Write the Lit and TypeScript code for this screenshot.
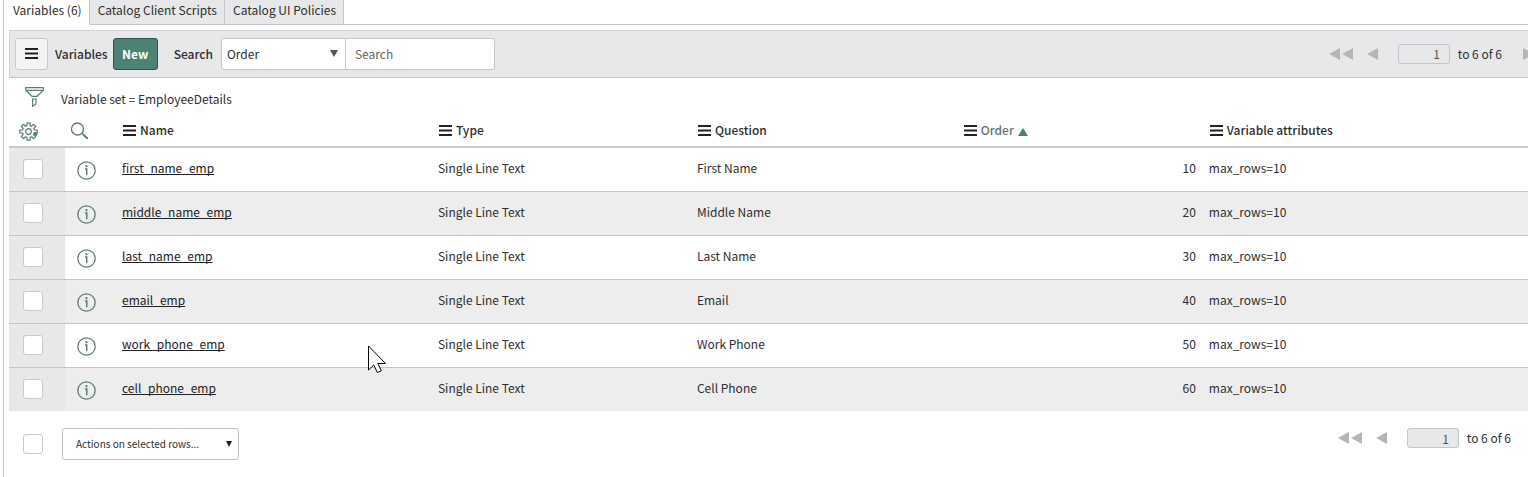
import { LitElement, html, css, svg } from "lit";
import { customElement, property } from "lit/decorators.js";

interface Variable {
  name: string;
  type: string;
  question: string;
  order: number;
  attributes: string;
}

const variables: Variable[] = [
  ["first_name_emp", "First Name"],
  ["middle_name_emp", "Middle Name"],
  ["last_name_emp", "Last Name"],
  ["email_emp", "Email"],
  ["work_phone_emp", "Work Phone"],
  ["cell_phone_emp", "Cell Phone"],
].map(([name, question], i) => ({
  name,
  question,
  type: "Single Line Text",
  order: (i + 1) * 10,
  attributes: "max_rows=10",
}));

const base = css`
  * {
    box-sizing: border-box;
  }
  button,
  input,
  select {
    font: inherit;
    color: inherit;
    margin: 0;
  }
  button {
    padding: 0;
    border: 0;
    background: none;
  }
  svg {
    display: block;
  }
`;

const bars = html`<svg width="13" height="11" viewBox="0 0 13 11" aria-hidden="true">
  <path d="M0 1h13M0 5.5h13M0 10h13" stroke="#222" stroke-width="2" />
</svg>`;

const arrowPath = (x: number, flip = false) =>
  flip ? svg`<path d="M${x} 0v12l11-6z" />` : svg`<path d="M${x + 11} 0v12L${x} 6z" />`;

/* Eight-toothed cog outline, centred on (cx, cy). */
function cogPath(cx: number, cy: number, outer: number, inner: number): string {
  const points: string[] = [];
  const teeth = 8;
  for (let i = 0; i < teeth; i++) {
    const mid = (i / teeth) * Math.PI * 2 - Math.PI / 2;
    for (const [offset, radius] of [
      [-0.27, inner],
      [-0.17, outer],
      [0.17, outer],
      [0.27, inner],
    ]) {
      const x = cx + Math.cos(mid + offset) * radius;
      const y = cy + Math.sin(mid + offset) * radius;
      points.push(`${x.toFixed(2)} ${y.toFixed(2)}`);
    }
  }
  return `M${points.join("L")}z`;
}

@customElement("list-pager")
class ListPager extends LitElement {
  @property({ type: Boolean }) next = false;

  static styles = [
    base,
    css`
      :host {
        display: flex;
        align-items: center;
        flex: none;
        line-height: 20px;
      }
      svg {
        fill: #b4b6b7;
      }
      .prev {
        margin: 0 20px 0 14px;
      }
      .page {
        width: 52px;
        height: 20px;
        padding: 0 9px;
        border: 1px solid #c3c5c8;
        border-radius: 3px;
        background: #e6e8ea;
        color: #555;
        text-align: right;
        line-height: 18px;
      }
      .total {
        margin: 0 2px 0 8px;
      }
      .next {
        margin-left: 19px;
      }
    `,
  ];

  render() {
    return html`
      <button aria-label="First page">
        <svg width="24" height="12" viewBox="0 0 24 12">${arrowPath(0)}${arrowPath(13)}</svg>
      </button>
      <button class="prev" aria-label="Previous page">
        <svg width="11" height="12" viewBox="0 0 11 12">${arrowPath(0)}</svg>
      </button>
      <input class="page" type="text" aria-label="Page row" value="1" />
      <span class="total">to 6 of 6</span>
      ${this.next
        ? html`<button class="next" aria-label="Next page">
            <svg width="11" height="12" viewBox="0 0 11 12">${arrowPath(0, true)}</svg>
          </button>`
        : ""}
    `;
  }
}

@customElement("app-root")
class AppRoot extends LitElement {
  static styles = [
    base,
    css`
      :host {
        display: block;
        position: relative;
        min-height: 100vh;
        margin-left: 3px;
        border-left: 1px solid #c4c6c8;
        overflow: hidden;
        background: #fff;
        color: #2e2e2e;
        font: 12px/20px "Noto Sans CJK SC", "Open Sans", sans-serif;
        box-sizing: border-box;
      }
      .tabs {
        display: flex;
        height: 25px;
        padding-left: 1px;
      }
      .tab {
        flex: none;
        padding: 0 7px 4px 8px;
        border-right: 1px solid #c4c6c8;
        border-bottom: 1px solid #c4c6c8;
        background: #e6e8ea;
      }
      .tab.active {
        background: #fff;
        border-bottom-color: #fff;
      }
      .tab-rest {
        flex: 1;
        border-bottom: 1px solid #c4c6c8;
      }
      .list {
        margin: 5px 0 0 5px;
      }
      .toolbar {
        display: flex;
        align-items: center;
        height: 48px;
        padding: 0 0 1px 5px;
        border: 1px solid #cfd1d3;
        border-bottom-color: #c4c6c8;
        border-right: 0;
        background: #e6e8ea;
      }
      .menu {
        display: grid;
        place-items: center;
        flex: none;
        width: 33px;
        height: 32px;
        border: 1px solid #c8cacc;
        border-radius: 3px;
        background: #f3f4f6;
      }
      .title,
      .search-label {
        font-weight: 500;
      }
      .title {
        margin: 0 5px 0 7px;
      }
      .new {
        width: 45px;
        height: 32px;
        margin-right: 16px;
        border: 1px solid #2f5548;
        border-radius: 3px;
        background: #4c8273;
        color: #fff;
        font-weight: 700;
      }
      .search-label {
        margin-right: 8px;
      }
      .picker {
        display: grid;
        align-items: center;
        flex: none;
      }
      .picker > * {
        grid-area: 1 / 1;
      }
      .picker select {
        width: 100%;
        height: 32px;
        appearance: none;
        border: 1px solid #c4c6c8;
        background: #fff;
      }
      .picker svg {
        justify-self: end;
        margin-right: 8px;
        pointer-events: none;
      }
      .field {
        width: 125px;
      }
      .field select {
        padding: 0 5px;
        border-radius: 3px 0 0 3px;
      }
      .search {
        width: 149px;
        height: 32px;
        padding: 0 9px;
        border: 1px solid #c4c6c8;
        border-left: 0;
        border-radius: 0 3px 3px 0;
        background: #fff;
      }
      .search::placeholder {
        color: #666;
        opacity: 1;
      }
      .toolbar list-pager {
        margin-left: auto;
        margin-right: -6px;
      }
      .filter {
        display: flex;
        align-items: center;
        gap: 17px;
        height: 36px;
        padding: 6px 0 0 16px;
      }
      .filter svg {
        margin-top: -4px;
      }
      table {
        width: 100%;
        table-layout: fixed;
        border-collapse: separate;
        border-spacing: 0;
      }
      .c-check {
        width: 56px;
      }
      .c-info {
        width: 48px;
      }
      .c-name {
        width: 20.8%;
      }
      .c-type {
        width: 17.05%;
      }
      .c-question {
        width: 17.5%;
      }
      .c-order {
        width: 16.2%;
      }
      th {
        height: 34px;
        padding: 0 10px;
        border-bottom: 2px solid #c8c9ca;
        text-align: left;
        font-weight: 500;
      }
      th.tool {
        padding: 2px 0 0 10px;
      }
      th.tool + th.tool {
        padding-left: 5px;
      }
      th.tool button {
        display: block;
      }
      .heading {
        display: flex;
        align-items: center;
        gap: 4px;
      }
      .sorted {
        color: #60756e;
      }
      .sorted svg:last-child {
        margin-top: 3px;
      }
      td {
        height: 44px;
        padding: 0 9px 4px;
        border-bottom: 1px solid #c4c6c8;
      }
      tbody tr:nth-child(even) {
        background: #ededed;
      }
      tbody tr:last-child td {
        height: 43px;
        border-bottom: 0;
      }
      td.check {
        padding: 0 14px 2px;
        background: #e6e8ea;
      }
      td.info {
        padding: 2px 0 0 12px;
      }
      td.info button {
        display: block;
      }
      td.number {
        padding-right: 4px;
        text-align: right;
      }
      .box {
        display: block;
        flex: none;
        width: 20px;
        height: 20px;
        appearance: none;
        border: 1px solid #c8cacc;
        border-radius: 3px;
        background: #fff;
      }
      a {
        color: #222;
        text-decoration: underline;
        text-decoration-skip-ink: none;
        text-underline-offset: 1px;
      }
      .footer {
        display: flex;
        align-items: flex-start;
        padding: 17px 15px 0 14px;
      }
      .footer .box {
        margin: 6px 19px 0 0;
      }
      .actions {
        width: 177px;
        font-size: 10px;
      }
      .actions select {
        padding: 0 13px;
        border-color: #c0c2c4;
        border-radius: 3px;
      }
      .actions svg {
        margin-right: 7px;
      }
      .footer list-pager {
        margin-left: auto;
      }
      .pointer {
        position: absolute;
        left: 364px;
        top: 345px;
      }
    `,
  ];

  private heading(label: string) {
    return html`<th scope="col"><div class="heading">${bars}${label}</div></th>`;
  }

  private row(v: Variable) {
    return html`<tr>
      <td class="check"><input class="box" type="checkbox" aria-label="Select ${v.name}" /></td>
      <td class="info">
        <button aria-label="Preview ${v.name}">
          <svg width="19" height="19" viewBox="0 0 19 19" fill="none" stroke="#5c7a70">
            <circle cx="9.5" cy="9.5" r="8.7" stroke-width="1.3" />
            <path d="M8 8h1.7v6.3" stroke-width="1.5" />
            <circle cx="9.5" cy="5.2" r="1.1" fill="#5c7a70" stroke="none" />
          </svg>
        </button>
      </td>
      <td><a href="#${v.name}">${v.name}</a></td>
      <td>${v.type}</td>
      <td>${v.question}</td>
      <td class="number">${v.order}</td>
      <td>${v.attributes}</td>
    </tr>`;
  }

  render() {
    return html`
      <div class="tabs" role="tablist">
        <button class="tab active" role="tab" aria-selected="true">Variables (6)</button>
        <button class="tab" role="tab">Catalog Client Scripts</button>
        <button class="tab" role="tab">Catalog UI Policies</button>
        <div class="tab-rest"></div>
      </div>
      <div class="list">
        <div class="toolbar">
          <button class="menu" aria-label="List menu">${bars}</button>
          <span class="title">Variables</span>
          <button class="new">New</button>
          <label class="search-label" for="field">Search</label>
          <div class="picker field">
            <select id="field"><option>Order</option></select>
            <svg width="8" height="7" viewBox="0 0 8 7"><path d="M0 0h8L4 7z" fill="#555" /></svg>
          </div>
          <input class="search" type="text" placeholder="Search" aria-label="Search text" />
          <list-pager next></list-pager>
        </div>
        <div class="filter">
          <svg width="19" height="20" viewBox="0 0 19 20" fill="none" stroke="#5c8074" stroke-width="1.2">
            <path d="M.7.7h17.6v2.6L12 9.3H7L.7 3.3zM.7 3.3h17.6M7.6 12h3.4v5l-3.4 2.3z" />
          </svg>
          <span>Variable set = EmployeeDetails</span>
        </div>
        <table>
          <colgroup>
            <col class="c-check" />
            <col class="c-info" />
            <col class="c-name" />
            <col class="c-type" />
            <col class="c-question" />
            <col class="c-order" />
            <col />
          </colgroup>
          <thead>
            <tr>
              <th class="tool">
                <button aria-label="Personalize list">
                  <svg width="19" height="19" viewBox="0 0 19 19" fill="none" stroke="#5c7a70" stroke-width="1.2">
                    <path d=${cogPath(9.5, 9.5, 8.8, 6.1)} stroke-linejoin="round" />
                    <circle cx="9.5" cy="9.5" r="2.8" />
                    <circle cx="16.4" cy="12" r="2" fill="#3f7f6d" stroke="none" />
                  </svg>
                </button>
              </th>
              <th class="tool">
                <button aria-label="Search columns">
                  <svg width="19" height="18" viewBox="0 0 19 18" fill="none" stroke="#5c7a70">
                    <circle cx="7.5" cy="7" r="6" stroke-width="1.3" />
                    <path d="M11.9 11.3l1.5 1.4" stroke-width="1.2" />
                    <path d="M13.2 12.5l4.5 4.3" stroke-width="2" />
                  </svg>
                </button>
              </th>
              ${this.heading("Name")}${this.heading("Type")}${this.heading("Question")}
              <th scope="col" aria-sort="ascending">
                <div class="heading sorted">
                  ${bars}<span>Order</span>
                  <svg width="10" height="8" viewBox="0 0 10 8"><path d="M0 8h10L5 0z" fill="#4c8273" /></svg>
                </div>
              </th>
              ${this.heading("Variable attributes")}
            </tr>
          </thead>
          <tbody>
            ${variables.map((v) => this.row(v))}
          </tbody>
        </table>
        <div class="footer">
          <input class="box" type="checkbox" aria-label="Select all rows" />
          <div class="picker actions">
            <select aria-label="Actions"><option>Actions on selected rows...</option></select>
            <svg width="6" height="6" viewBox="0 0 6 6"><path d="M0 0h6L3 6z" fill="#222" /></svg>
          </div>
          <list-pager></list-pager>
        </div>
      </div>
      <svg class="pointer" width="19" height="29" viewBox="0 0 19 29" aria-hidden="true">
        <path d="M.5 1v24l5.3-5 3.5 7.5 4-1.7L9.8 18.500h7.700z" fill="#fff" stroke="#000" />
      </svg>
    `;
  }
}
